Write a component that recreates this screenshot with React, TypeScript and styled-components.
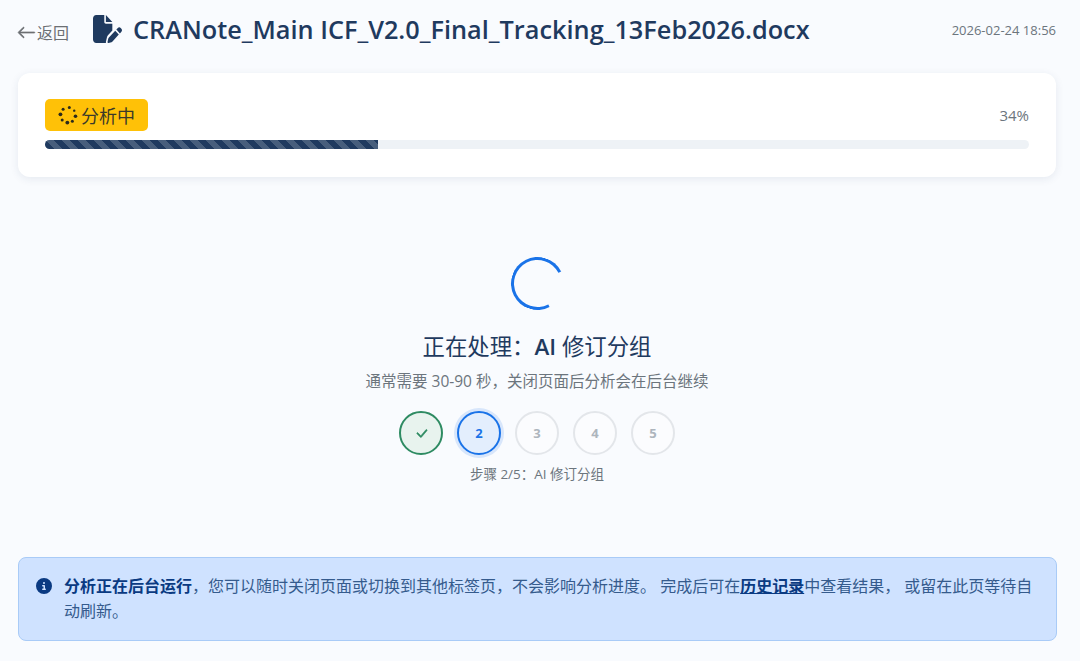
import * as React from 'react';
import styled, { createGlobalStyle } from 'styled-components';
import { FaFilePen, FaCircleInfo } from 'react-icons/fa6';
import { BsArrowLeft, BsCheckLg } from 'react-icons/bs';

const GlobalStyle = createGlobalStyle`
    html, body {
        margin: 0;
        padding: 0;
        background: #f9fbfe;
        font-family: "Open Sans", "Noto Sans CJK SC", sans-serif;
    }
    * {
        box-sizing: border-box;
    }
`;

const Page = styled.div`
    width: 1080px;
    height: 661px;
    overflow: hidden;
    padding: 0 24px 20px 18px;
    display: flex;
    flex-direction: column;
`;

const Header = styled.header`
    height: 73px;
    display: flex;
    align-items: center;
    padding-bottom: 13px;
`;

const BackLink = styled.a`
    display: flex;
    align-items: center;
    gap: 1px;
    color: #6c6f73;
    font-size: 16px;
    width: 76px;
    padding-top: 4px;
    margin-left: -1px;
    svg {
        font-size: 19px;
        stroke: currentColor;
        stroke-width: 0.5px;
    }
`;

const FileTitle = styled.h1`
    margin: 0 0 2px;
    flex: 1;
    display: flex;
    align-items: center;
    gap: 11px;
    color: #1f3a5f;
    font-size: 25.3px;
    font-weight: 600;
    white-space: nowrap;
    svg {
        width: 29px;
        height: 28px;
        flex: none;
    }
`;

const Timestamp = styled.time`
    color: #6c757d;
    font-size: 13px;
`;

const ProgressCard = styled.section`
    height: 104px;
    background: #ffffff;
    border-radius: 12px;
    box-shadow: 0 2px 8px rgba(31, 58, 95, 0.09);
    padding: 26px 27px 0;
`;

const ProgressTop = styled.div`
    display: flex;
    justify-content: space-between;
    align-items: center;
    height: 32px;
    margin-bottom: 9px;
`;

const Badge = styled.span`
    display: flex;
    align-items: center;
    gap: 3px;
    height: 32px;
    padding: 0 13px;
    background: #ffc107;
    border-radius: 5px;
    color: #3b3a2a;
    font-size: 18px;
    svg {
        width: 20px;
        height: 20px;
    }
`;

const Percent = styled.span`
    color: #6c757d;
    font-size: 15px;
`;

const Track = styled.div`
    height: 9px;
    background: #eef2f6;
    border-radius: 5px;
    overflow: hidden;
`;

const Fill = styled.div`
    height: 100%;
    background-color: #1f3a5f;
    background-image: linear-gradient(
        45deg,
        rgba(255, 255, 255, 0.18) 25%,
        transparent 25%,
        transparent 50%,
        rgba(255, 255, 255, 0.18) 50%,
        rgba(255, 255, 255, 0.18) 75%,
        transparent 75%
    );
    background-size: 16px 16px;
`;

const Status = styled.section`
    flex: 1;
    display: flex;
    flex-direction: column;
    align-items: center;
    padding-top: 80px;
`;

const Spinner = styled.div`
    width: 53px;
    height: 53px;
    border-radius: 50%;
    border: 3.5px solid #1a73e8;
    border-right-color: transparent;
    transform: rotate(18deg);
    margin-left: 1px;
`;

const StatusTitle = styled.h2`
    margin: 21px 0 0;
    color: #1f3a5f;
    font-size: 22.4px;
    font-weight: 400;
    line-height: 32px;
    b {
        font-weight: 600;
    }
`;

const StatusHint = styled.p`
    margin: 8px 0 0;
    color: #6c757d;
    font-size: 15.5px;
    line-height: 20px;
`;

const Steps = styled.div`
    display: flex;
    gap: 14px;
    margin-top: 20px;
`;

const Step = styled.div<{ $state: 'done' | 'active' | 'todo' }>`
    width: 44px;
    height: 44px;
    border-radius: 50%;
    display: flex;
    align-items: center;
    justify-content: center;
    font-size: 13px;
    font-weight: 700;
    border: 2px solid ${(p) => (p.$state === 'done' ? '#2e8b62' : p.$state === 'active' ? '#1a73e8' : '#e3e6ea')};
    background: ${(p) => (p.$state === 'done' ? '#e8f3ee' : p.$state === 'active' ? '#e3eefd' : '#fbfcfe')};
    color: ${(p) => (p.$state === 'done' ? '#2e8b62' : p.$state === 'active' ? '#1a73e8' : '#adb5bd')};
    box-shadow: ${(p) => (p.$state === 'active' ? '0 0 0 3px rgba(26, 115, 232, 0.15)' : 'none')};
    svg {
        font-size: 15px;
        stroke: currentColor;
        stroke-width: 0.6px;
    }
`;

const StepCaption = styled.div`
    margin-top: 10px;
    color: #6c757d;
    font-size: 13.5px;
    line-height: 18px;
`;

const Notice = styled.aside`
    height: 84px;
    display: flex;
    gap: 12px;
    padding: 16px 17px;
    margin-right: -1px;
    background: #cfe2ff;
    border: 1px solid #a9cbf7;
    border-radius: 8px;
    color: #355b8d;
    font-size: 16px;
    line-height: 25px;
    svg {
        flex: none;
        font-size: 16px;
        color: #0a3a82;
        margin-top: 4px;
    }
    strong {
        color: #0a3a82;
        font-weight: 700;
    }
`;

const HistoryLink = styled.a`
    color: #0a3a82;
    font-weight: 700;
    text-decoration: underline;
`;

// dot angle and radius of the small badge spinner
const dots: [number, number][] = [
    [-80, 1.5],
    [-35, 1.2],
    [10, 1.8],
    [55, 1.5],
    [95, 1.9],
    [140, 1.5],
    [185, 1.9],
    [230, 1.5],
];

const DotSpinner = () => (
    <svg viewBox="0 0 20 20">
        {dots.map(([deg, r]) => (
            <circle
                key={deg}
                cx={10 + 7.6 * Math.cos((deg * Math.PI) / 180)}
                cy={10 + 7.6 * Math.sin((deg * Math.PI) / 180)}
                r={r}
                fill="#2b2a1c"
            />
        ))}
    </svg>
);

const steps = [
    { label: '1', state: 'done' },
    { label: '2', state: 'active' },
    { label: '3', state: 'todo' },
    { label: '4', state: 'todo' },
    { label: '5', state: 'todo' },
] as const;

export default function App() {
    return (
        <Page>
            <GlobalStyle />
            <Header>
                <BackLink><BsArrowLeft />返回</BackLink>
                <FileTitle><FaFilePen preserveAspectRatio="none" />CRANote_Main ICF_V2.0_Final_Tracking_13Feb2026.docx</FileTitle>
                <Timestamp>2026-02-24 18:56</Timestamp>
            </Header>
            <ProgressCard>
                <ProgressTop>
                    <Badge><DotSpinner />分析中</Badge>
                    <Percent>34%</Percent>
                </ProgressTop>
                <Track>
                    <Fill style={{ width: '33.8%' }} />
                </Track>
            </ProgressCard>
            <Status>
                <Spinner />
                <StatusTitle>正在处理：<b>AI</b> 修订分组</StatusTitle>
                <StatusHint>通常需要 30-90 秒，关闭页面后分析会在后台继续</StatusHint>
                <Steps>
                    {steps.map((s) => (
                        <Step key={s.label} $state={s.state}>
                            {s.state === 'done' ? <BsCheckLg /> : s.label}
                        </Step>
                    ))}
                </Steps>
                <StepCaption>步骤 2/5：AI 修订分组</StepCaption>
            </Status>
            <Notice>
                <FaCircleInfo />
                <div>
                    <strong>分析正在后台运行</strong>，您可以随时关闭页面或切换到其他标签页，不会影响分析进度。 完成后可在<HistoryLink>历史记录</HistoryLink>中查看结果， 或留在此页等待自动刷新。
                </div>
            </Notice>
        </Page>
    );
}
